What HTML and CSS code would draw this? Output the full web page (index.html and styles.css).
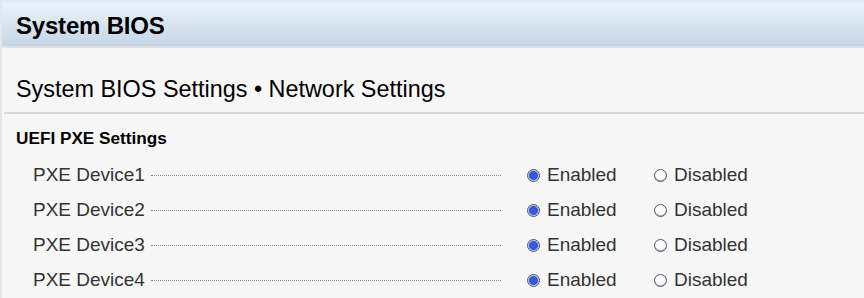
FILE: index.html
```html
<!DOCTYPE html>
<html lang="en">
<head>
    <meta charset="UTF-8">
    <title>System BIOS - Network Settings</title>
    <link rel="stylesheet" href="styles.css">
</head>
<body>
    <div class="page">
        <header class="page-header">System BIOS</header>

        <h2 class="subtitle">System BIOS Settings &bull; Network Settings</h2>

        <section class="settings">
            <h3>UEFI PXE Settings</h3>

            <div class="setting-row">
                <span class="label">PXE Device1</span>
                <span class="leader"></span>
                <label class="option"><span class="radio checked"></span>Enabled</label>
                <label class="option"><span class="radio"></span>Disabled</label>
            </div>
            <div class="setting-row">
                <span class="label">PXE Device2</span>
                <span class="leader"></span>
                <label class="option"><span class="radio checked"></span>Enabled</label>
                <label class="option"><span class="radio"></span>Disabled</label>
            </div>
            <div class="setting-row">
                <span class="label">PXE Device3</span>
                <span class="leader"></span>
                <label class="option"><span class="radio checked"></span>Enabled</label>
                <label class="option"><span class="radio"></span>Disabled</label>
            </div>
            <div class="setting-row">
                <span class="label">PXE Device4</span>
                <span class="leader"></span>
                <label class="option"><span class="radio checked"></span>Enabled</label>
                <label class="option"><span class="radio"></span>Disabled</label>
            </div>
        </section>
    </div>
</body>
</html>
```

FILE: styles.css
```css
body {
    margin: 0;
    font-family: 'Liberation Sans', Arial, sans-serif;
    background-color: #f7f7f7;
    color: #000;
}
.page {
    min-height: 298px;
    border-left: 2px solid #e3e6ea;
}
.page-header {
    height: 40px;
    padding: 6px 0 0 14px;
    line-height: 40px;
    font-size: 24px;
    font-weight: bold;
    letter-spacing: -0.2px;
    background: linear-gradient(to bottom, #dfe6ee 0, #e8f1fb 4px, #dde8f3 18px, #c7d7e7 44px, #c2d2e2 46px);
    border-bottom: 2px solid #dfe1e4;
}
.subtitle {
    margin: 0 0 0 2px;
    padding: 27px 0 9px 12px;
    line-height: 28px;
    font-size: 23.4px;
    font-weight: normal;
    letter-spacing: 0;
    border-bottom: 2px solid #d9d9d9;
}
.settings h3 {
    margin: 0 0 9px;
    padding: 14px 0 0 14px;
    line-height: 20px;
    font-size: 17.2px;
}
.setting-row {
    display: flex;
    align-items: center;
    height: 35px;
    padding-left: 31px;
    font-size: 19px;
    color: #333;
}
.label {
    line-height: 35px;
}
.leader {
    width: 350px;
    height: 0;
    margin: 1px 0 0 6px;
    border-bottom: 1px dotted #8a8a8a;
}
.option {
    display: flex;
    align-items: center;
    width: 127px;
    gap: 7px;
    line-height: 35px;
}
.setting-row .leader + .option {
    margin-left: 26px;
}
.radio {
    width: 11px;
    height: 11px;
    margin-top: 2px;
    border: 1px solid #4e5866;
    border-radius: 50%;
    background: #fff;
    box-shadow: inset 0 -1px 0 #9fb3cc;
}
.radio.checked {
    background: radial-gradient(circle, #3558dc 0, #3558dc 4px, #b8c4e6 5px, #ffffff 6px);
    box-shadow: none;
}
```
